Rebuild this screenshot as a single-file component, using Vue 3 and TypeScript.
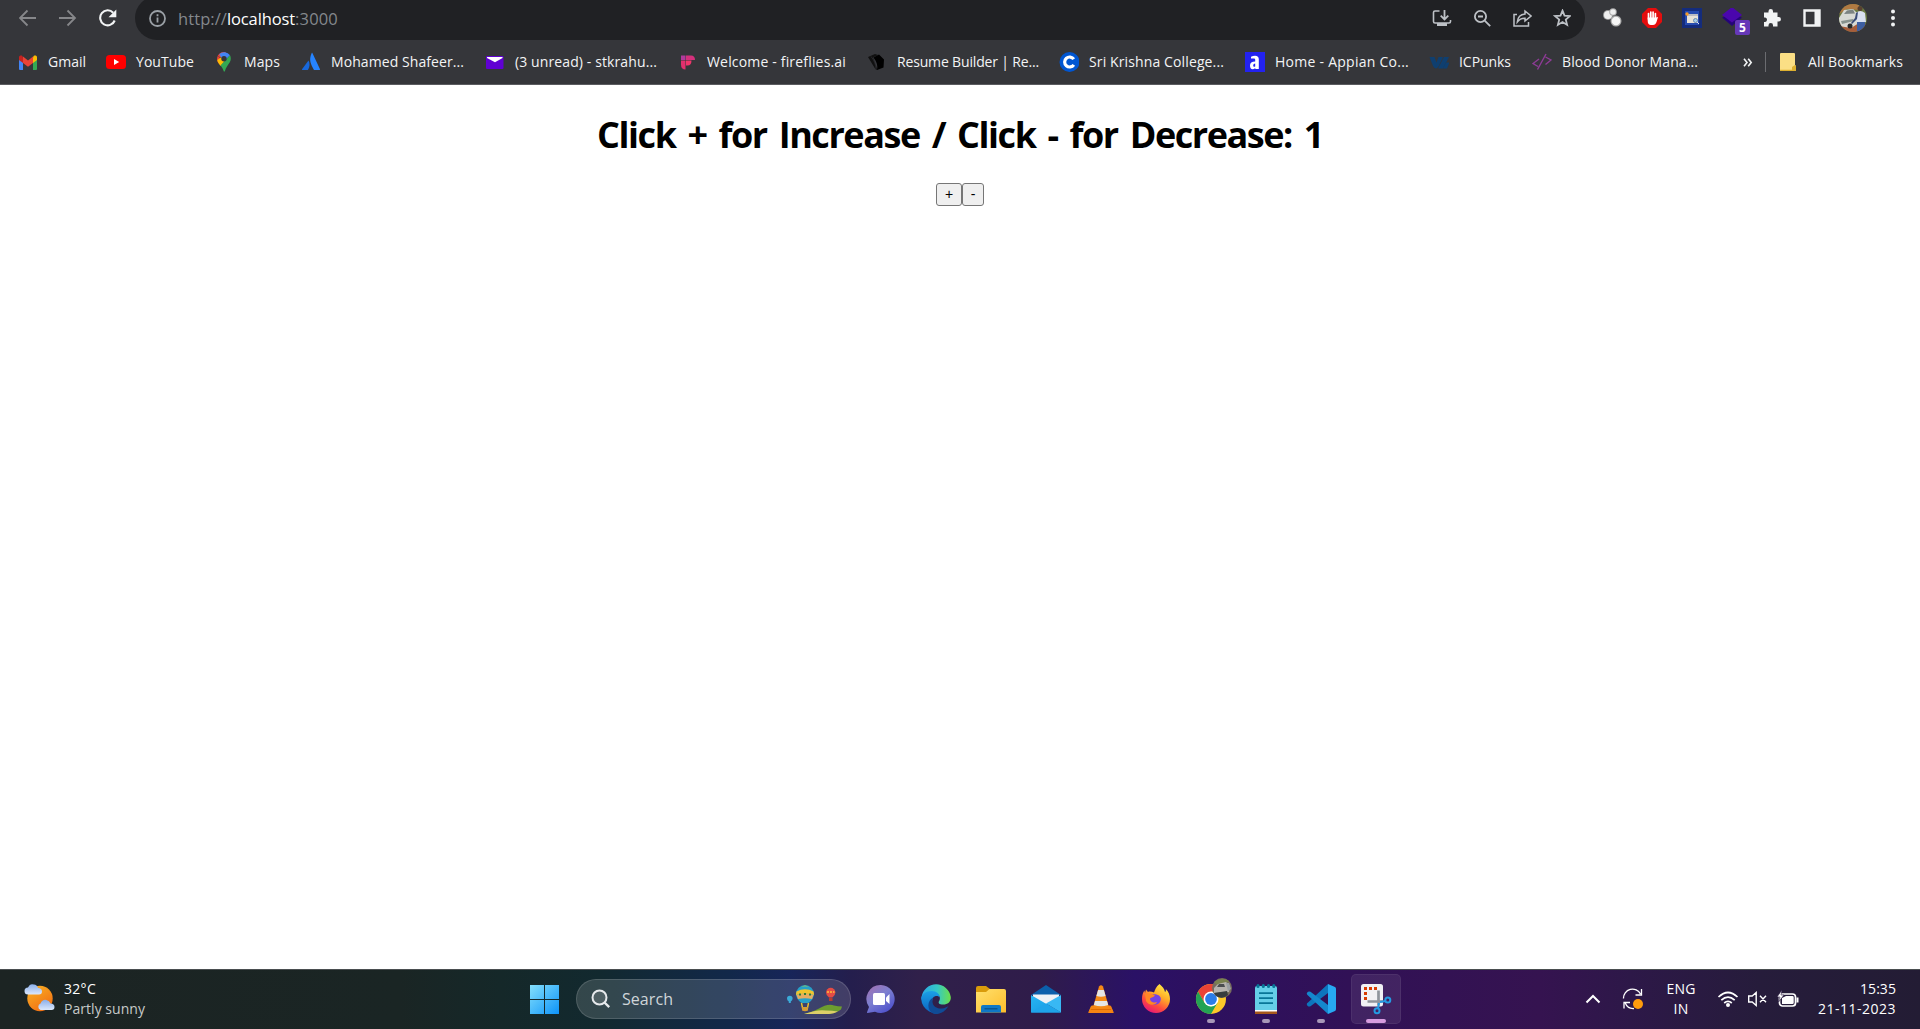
<script setup lang="ts">
import { ref } from 'vue'

interface Bookmark {
  label: string
  cell: number
  text: number
  art: string
}

interface TaskApp {
  name: string
  state?: 'open' | 'active'
  art: string
}

const count = ref(1)

// Tracks a label so that it fills the given width exactly.
const vFit = {
  mounted(el: HTMLElement, binding: { value: number }) {
    const natural = el.getBoundingClientRect().width
    const letters = (el.textContent ?? '').trim().length
    el.style.letterSpacing = `${(binding.value - natural) / letters}px`
  },
}

// Icons are drawn on a 20 x 20 grid.
const bookmarks: Bookmark[] = [
  {
    label: 'Gmail', cell: 88, text: 38,
    art: '<path d="M1 5v12a1 1 0 0 0 1 1h3V8z" fill="#4285f4"/><path d="M19 5v12a1 1 0 0 1-1 1h-3V8z" fill="#34a853"/><path d="M15 5.500V11l4-3V5.500C19 3.500 17 3 15.600 4z" fill="#fbbc04"/><path d="M5 5.500V11L1 8V5.500C1 3.500 3 3 4.400 4z" fill="#c5221f"/><path d="M5 4.600l5 3.800 5-3.800V11l-5 3.800L5 11z" fill="#ea4335"/>',
  },
  {
    label: 'YouTube', cell: 108, text: 58,
    art: '<rect x="0" y="3" width="20" height="14" rx="3.500" fill="#f00"/><path d="M8 7l5.200 3L8 13z" fill="#fff"/>',
  },
  {
    label: 'Maps', cell: 87, text: 36,
    art: '<path d="M4.500 11.500C3 9 2.600 6.500 3.600 4L8 7.500z" fill="#ea4335"/><path d="M3.600 4A7 7 0 0 1 12 .3L7.500 6z" fill="#ea4335"/><path d="M5.200 2.300A7 7 0 0 1 16 3.300L11.500 8 7.500 6z" fill="#4285f4"/><path d="M3.300 8c.3 2 1.700 4 3.200 6l5.500-6-5-2.500z" fill="#fbbc04"/><path d="M16 3.300c1 2 1.200 4.700-.2 7-1.800 3-4 5-5 9.200h-1c-.5-2-1.600-3.800-3.300-6z" fill="#34a853"/><circle cx="10" cy="6.700" r="2.700" fill="#35363a"/>',
  },
  {
    label: 'Mohamed Shafeer...', cell: 184, text: 133,
    art: '<path d="M7.500 8.500C9 11 9 14.500 6.900 18H1.500c-.5 0-.7-.4-.5-.8z" fill="#1868db"/><path d="M10.600 1.200c.3-.5.600-.5.900 0L19 17.200c.2.500 0 .8-.5.800h-5c-.4 0-.6-.1-.8-.5C10 12 7.500 8 10.600 1.200z" fill="#2684ff"/>',
  },
  {
    label: '(3 unread) - stkrahu...', cell: 192, text: 142,
    art: '<rect x="1" y="4" width="17.500" height="13" rx="1" fill="#6001d2"/><path d="M2 5h15.500v1L10 10.200 2 6z" fill="#fff"/>',
  },
  {
    label: 'Welcome - fireflies.ai', cell: 190, text: 139,
    art: '<path d="M4 3.500h4.500v4.500H4z" fill="#b13a9b"/><path d="M9 3.500h5q4 0 4 4.500H9z" fill="#d4307c"/><path d="M4 8.500h4.500V17.500q-4.500 0-4.500-5z" fill="#e0306d"/><path d="M9 8.500h5.500q0 5-4 5H9z" fill="#f0356b"/>',
  },
  {
    label: 'Resume Builder | Re...', cell: 192, text: 142,
    art: '<path d="M1 5l7-3 3 1-5 2.500 4.500 12.500q-2 0-2.800-2z" fill="#111"/><path d="M6.500 5.500L12 2.500l5 5-.5 8-6.500 2.500q1.500-6-3.500-12.500z" fill="#000"/><path d="M4 4.500c3 3.500 5 8 5 12.500" stroke="#35363a" stroke-width=".6" fill="none"/>',
  },
  {
    label: 'Sri Krishna College...', cell: 186, text: 135,
    art: '<circle cx="10.500" cy="10" r="10" fill="#0056d2"/><path d="M14.800 12.800a5 5 0 1 1 0-5.600" fill="none" stroke="#fff" stroke-width="3.200"/>',
  },
  {
    label: 'Home - Appian Co...', cell: 184, text: 134,
    art: '<path d="M0 0h20v20H0z" fill="#2322f0"/><path d="M6 6.500V4.800Q8 3.800 10 3.800q3.800 0 3.800 3.500V17h-3.500v-1Q9 17.200 7.600 17.200 5 17 5 13.500q0-4 5.200-4V7.700q0-1.200-1.200-1.200zM10.200 11.500q-2 0-2 2t2 1z" fill="#fff" fill-rule="evenodd"/>',
  },
  {
    label: 'ICPunks', cell: 103, text: 52,
    art: '<path d="M.5 5h5l2 5.500L9.500 5H14l-4.500 9.500Q6.500 18.500 4 14z" fill="#0f3f70"/><path d="M15 5h5l-6 11.500H9z" fill="#0f3f70"/><path d="M17 10.500h3.500L18 16.500h-4z" fill="#0f3f70"/>',
  },
  {
    label: 'Blood Donor Mana...', cell: 190, text: 136,
    art: '<path d="M7 7L1 11.500l5 3M13.500 5l5.500 3-5.500 4.500M14 2L5.500 17.500" fill="none" stroke="#8e3b96" stroke-width="1.400"/>',
  },
]

// Icons are drawn on a 30 x 30 grid.
const apps: TaskApp[] = [
  {
    name: 'Chat',
    art: '<defs><linearGradient id="chat" x1="0" y1="0" x2=".7" y2="1"><stop offset="0" stop-color="#a66fae"/><stop offset=".5" stop-color="#7c7fd0"/><stop offset="1" stop-color="#4f52cc"/></linearGradient></defs><path d="M15 1a14 14 0 1 1-6 26.800L1.500 29q-.7 0-.5-.8L3 23A14 14 0 0 1 15 1z" fill="url(#chat)"/><rect x="7" y="9" width="12" height="12" rx="1.500" fill="#fff"/><path d="M20 13.500l3.500-3.500v10L20 17z" fill="#fff"/>',
  },
  {
    name: 'Edge',
    art: '<defs><linearGradient id="e1"><stop offset="0" stop-color="#2aa6e8"/><stop offset=".55" stop-color="#35c8c4"/><stop offset="1" stop-color="#6be04a"/></linearGradient><linearGradient id="e2" x1="0" y1="0" x2="0" y2="1"><stop offset="0" stop-color="#1ba0e6"/><stop offset="1" stop-color="#0b62c0"/></linearGradient></defs><path d="M.5 13A14.800 14.800 0 0 1 29.800 13c.4 5-3.500 7.500-7.500 7.500-4.500 0-5.500-1.800-4-3.800 1.500-2.500.5-7.200-5-7.200C7 9.500 2 11 .3 16z" fill="url(#e1)"/><path d="M.2 15c.3-4.500 5-8 10.500-8 5 0 8 3 8 6.500-1-2-5-2-6.500 0-2 3-1.700 8 2.500 11.500 2 1.800 5 2.800 8.300 2A15 15 0 0 1 .2 15z" fill="url(#e2)"/><path d="M12.200 13.500c-3 8 3 11.500 8.800 11 2.500-.2 5-1.700 6.500-2.500C24 28 18 31 12.500 29.800 5.500 26.500 6 16.500 12.200 13.500z" fill="#104b96"/>',
  },
  {
    name: 'File Explorer',
    art: '<defs><linearGradient id="fold" x1="0" y1="0" x2="1" y2="1"><stop offset="0" stop-color="#ffe06d"/><stop offset="1" stop-color="#fdbd2b"/></linearGradient></defs><path d="M0 4q0-2 2-2h8l4 3v4H0z" fill="#d99b0b"/><path d="M0 8h10l3.500-3H28q2 0 2 2v21.500H0z" fill="url(#fold)"/><path d="M5 28.500V23q0-2 2-2h16q2 0 2 2v5.500z" fill="#0f78c6"/><path d="M8.500 24.800h13" stroke="#074e87" stroke-width="1.200"/>',
  },
  {
    name: 'Mail',
    art: '<defs><linearGradient id="mail" x1="0" y1="0" x2="1" y2="1"><stop offset="0" stop-color="#27b5f3"/><stop offset="1" stop-color="#1697e2"/></linearGradient></defs><path d="M0 11L15 1l15 10z" fill="#0b5fab"/><path d="M2 10.500h26v3L15 21 2 13z" fill="#eef1f5"/><path d="M0 11l30 17.500H0z" fill="url(#mail)"/><path d="M30 11v17.500L15 19.500z" fill="#38b8f4"/><path d="M0 28.500L15 19.500l15 9z" fill="#1ea4ea"/>',
  },
  {
    name: 'VLC',
    art: '<path d="M5.500 22h19l2.800 6.500H2.700z" fill="#f58412" stroke="#f58412" stroke-width="1" stroke-linejoin="round"/><path d="M13 2.500Q15 0 17 2.500l5.800 20.200q-7.800 3.800-15.600 0z" fill="#f58a17"/><path d="M12.100 6h5.800l1.700 6q-4.600 1.500-9.200 0z" fill="#e5e5e5"/><path d="M9 17h12l1.200 4q-7.200 2.500-14.400 0z" fill="#e5e5e5"/><path d="M5 25.500h20" stroke="#d76500" stroke-width=".8"/>',
  },
  {
    name: 'Firefox',
    art: '<defs><linearGradient id="fox" x1=".8" y1="0" x2=".25" y2="1"><stop offset="0" stop-color="#fff14a"/><stop offset=".38" stop-color="#ffad28"/><stop offset=".7" stop-color="#ff4b3d"/><stop offset="1" stop-color="#e3127e"/></linearGradient></defs><path d="M18.500 0c3 2.500 5 5 5.500 8 1-.5 1-2 .8-3 3 3 4.200 6.500 4.200 10A14 14 0 0 1 1 15c0-4 1-6.500 2.500-8.500L4 9l1-3.500L7 8c2-1 4 0 6 .5 1-2.500 2-6 5.500-8.500z" fill="url(#fox)"/><path d="M8 15c0-4 4-5.500 7.500-4.500 4 1 5.500 4 3.500 7.500-2.500 4-9 3.500-11-1z" fill="#7542e5"/><path d="M4 10c3-1 7-1 10 1.500-1 2-4 1.500-5 3 0 4 4.500 4.500 7 3.500-1.500 4-9 3.500-11-1z" fill="#ff8725"/>',
  },
  {
    name: 'Chrome', state: 'open',
    art: '<circle cx="15" cy="15" r="15" fill="#fdc829"/><path d="M2 7.500a15 15 0 0 1 26 0H15L8.500 18.700z" fill="#ea4335"/><path d="M2 7.500A15 15 0 0 0 15 30l6.500-11.200L15 22.500 8.500 18.700z" fill="#23a354"/><circle cx="15" cy="15" r="7.500" fill="#fff"/><circle cx="15" cy="15" r="5.900" fill="#2b7de9"/><g transform="translate(26 4)"><circle r="10" fill="#766c5e"/><path d="M-8-6Q0-12 7-7L3-4-5-3z" fill="#79824f"/><path d="M-8 0l4-4L4-6 8-2 7 4-8 5z" fill="#b5b3ad"/><path d="M-5-1l2-3 5 0 1 3z" fill="#4a4e50"/><path d="M-8 5L5 3 6 7Q0 12-6 8z" fill="#373d3e"/><path d="M4-5l3 0 2 6-3 2z" fill="#9aa0a3"/></g>',
  },
  {
    name: 'Notepad', state: 'open',
    art: '<path d="M4 25h22v5H4z" fill="#a6571b"/><path d="M4 25h22v2.500H4z" fill="#fff"/><path d="M4 4q0-2 2-2h18q2 0 2 2v22H4z" fill="#65cfe8"/><path d="M8 9.200h14M8 14.200h14M8 19.200h14" stroke="#087697" stroke-width="1.700"/><g fill="#087697"><rect x="5.500" y="0" width="3" height="4" rx="1.500"/><rect x="10.800" y="0" width="3" height="4" rx="1.500"/><rect x="16" y="0" width="3" height="4" rx="1.500"/><rect x="21.300" y="0" width="3" height="4" rx="1.500"/></g>',
  },
  {
    name: 'Visual Studio Code', state: 'open',
    art: '<path d="M22 0L2 18.500q-2.500 1.700 0 3.700 1.200.8 2.500 0L22 9z" fill="#0d75bd"/><path d="M22 30L2 11.500Q-.5 9.700 2 7.800q1.200-.8 2.500 0L22 21z" fill="#1487cd"/><path d="M22 0l7 3q1 .5 1 2v20q0 1.500-1 2l-7 3z" fill="#27a9f2"/>',
  },
  {
    name: 'Snipping Tool', state: 'active',
    art: '<rect x="0" y="0" width="22" height="22.500" rx="2.500" fill="#f1f1f4"/><path d="M4.500 16V4.500H17" fill="none" stroke="#d83b01" stroke-width="3" stroke-dasharray="3 2"/><path d="M17.500 6.500v15M6.500 17.500H22" stroke="#8f959c" stroke-width="2.700"/><g fill="none" stroke="#249be3" stroke-width="2"><circle cx="26.800" cy="16" r="2.500"/><circle cx="16" cy="26.800" r="2.500"/><path d="M19 18l5.500-1M18 19l-1 5.500"/></g>',
  },
]
</script>

<template>
  <div class="screen">
    <header class="browser">
      <div class="toolbar">
        <span class="tool dim"><svg width="18" height="18" viewBox="0 0 18 18"><path d="M17 9H2M8.500 1.500L1 9l7.500 7.500" /></svg></span>
        <span class="tool dim"><svg width="18" height="18" viewBox="0 0 18 18"><path d="M0 9H15.500M8.500 1.500L16 9l-7.500 7.500" /></svg></span>
        <span class="tool lit"><svg width="18" height="18" viewBox="0 0 18 18"><path d="M15.700 11.500A7.500 7.500 0 1 1 14.200 3.700" stroke-width="2.100" /><path d="M17.300.5v7.700H9.500z" fill="#f1f3f4" stroke="none" /></svg></span>
        <div class="address">
          <svg class="info" width="17" height="17" viewBox="0 0 17 17"><circle cx="8.500" cy="8.500" r="7.500" /><path d="M8.500 7.500v5M8.500 4.200v2" /></svg>
          <span class="url"><span v-fit="49">http://</span><span v-fit="68" class="host">localhost</span><span v-fit="43">:3000</span></span>
          <span class="tool grey"><svg width="20" height="18" viewBox="0 0 20 18"><path d="M7.500 2H3Q1.500 2 1.500 3.500v9Q1.500 14 3 14h14q1.500 0 1.500-1.500V11" stroke-width="1.600" /><path d="M12.500 1v9M8.700 6.700l3.800 3.800 3.800-3.800" /><path d="M5 14h10v3H5z" fill="#bdc1c6" stroke="none" /></svg></span>
          <span class="tool grey"><svg width="18" height="18" viewBox="0 0 18 18"><circle cx="7.500" cy="7.500" r="5.600" /><path d="M11.700 11.700l5.500 5.500M5 7.500h5" /></svg></span>
          <span class="tool grey"><svg width="20" height="18" viewBox="0 0 20 18"><path d="M5 5.500H2V17H16.500v-4" stroke-width="1.500" /><path d="M13 2l6 5-6 5V9.300Q8.500 9 5.300 13 6 5.500 13 5z" stroke-width="1.500" /></svg></span>
          <span class="tool grey"><svg width="18" height="18" viewBox="0 0 18 18"><path d="M9.500 1.700l2 5 5.400.4-4.100 3.500 1.300 5.300-4.600-2.800-4.600 2.800 1.300-5.300L2.100 7.100l5.400-.4z" /></svg></span>
        </div>
        <span class="tool">
          <svg width="20" height="20" viewBox="0 0 20 20"><g stroke="none"><circle cx="6" cy="7" r="5" fill="#999" /><circle cx="6" cy="7" r="4" fill="#eee" /><circle cx="11" cy="4" r="3.800" fill="#aaa" /><circle cx="11" cy="4" r="2.800" fill="#eee" /><circle cx="14" cy="13" r="5.500" fill="#aaa" /><circle cx="14" cy="13" r="4.300" fill="#f6f6f6" /></g></svg>
        </span>
        <span class="tool">
          <svg width="20" height="20" viewBox="0 0 20 20"><path d="M6 0h8l6 6v8l-6 6H6l-6-6V6z" fill="#e40d0d" stroke="none" /><path d="M6.500 5.500V11M8.800 4v7M11.100 4v7M13.400 5.500V12" stroke="#fff" stroke-width="1.700" stroke-linecap="round" /><path d="M5.700 9.500h8.500l1.800-.5-1.500 5q-1 3-3.500 3H9q-3.300 0-3.300-4z" fill="#fff" stroke="none" /></svg>
        </span>
        <span class="tool">
          <svg width="20" height="20" viewBox="0 0 20 20"><path d="M0 0h20v20H0z" fill="#142c7c" stroke="none" /><path d="M3 3h14v14H3z" fill="#254bb0" stroke="none" /><path d="M5 6h11v9H5z" fill="#e8e3d7" stroke="none" /><path d="M5 7h11" stroke="#8d96af" stroke-width="1" /><circle cx="5" cy="6" r="1.700" fill="#f49a25" stroke="none" /><circle cx="13.500" cy="12.500" r="2" fill="#a9d0e8" stroke="#597ba5" stroke-width=".8" /><path d="M15 14l2 2" stroke="#dfe6f3" stroke-width="1" /></svg>
        </span>
        <span class="tool badge-host">
          <svg width="20" height="20" viewBox="0 0 20 20"><path d="M0 9.500l10 8.500 10-8.500-10-4z" fill="#25047a" stroke="none" /><path d="M10-1l10 8-10 7.500L0 7z" fill="#4a06ad" stroke="none" /></svg>
          <b class="badge">5</b>
        </span>
        <span class="tool">
          <svg width="20" height="20" viewBox="0 0 20 20"><path d="M2 4.500h4.500V3.200a2.200 2.200 0 0 1 4.500 0v1.300h4.500V9h1.200a2.200 2.200 0 0 1 0 4.500h-1.200V18.500h-4.500v-1.200a2.200 2.200 0 0 0-4.500 0v1.200H2V14h1.200a2.300 2.300 0 0 0 0-4.500H2z" fill="#f1f3f4" stroke="none" /></svg>
        </span>
        <span class="tool">
          <svg width="18" height="18" viewBox="0 0 18 18"><path d="M1.500 1.500h15v15h-15z" stroke="#f1f3f4" stroke-width="2.400" /><path d="M11.500 1H17v16h-5.500z" fill="#f1f3f4" stroke="none" /></svg>
        </span>
        <span class="tool avatar">
          <svg width="28" height="28" viewBox="0 0 28 28"><defs><clipPath id="face"><circle cx="14" cy="14" r="14" /></clipPath></defs><g clip-path="url(#face)" stroke="none"><path d="M0 0h28v28H0z" fill="#6b7b43" /><path d="M0 0h20v6L8 5 0 10z" fill="#b17a42" /><path d="M0 20h28v8H0z" fill="#a65d3b" /><path d="M0 14l5-8 9-1 5 5 1 9-8 5-12-2z" fill="#d7d9d4" /><path d="M5 10l3-3.500 6-1 2 4z" fill="#7b8382" /><path d="M2 17l12-2 1 2-12 3z" fill="#86918c" /><circle cx="11" cy="22" r="2.500" fill="#25282a" /><path d="M17 9q4-4 9 0l1 9-9 1z" fill="#d9e0f0" /><path d="M17 9l2-1-1 7-5 5-1-1 4-5z" fill="#394b77" /><path d="M18 18h8v9h-8z" fill="#3d5ea1" /><circle cx="21" cy="4.500" r="2.500" fill="#594030" /></g></svg>
        </span>
        <span class="tool">
          <svg width="6" height="18" viewBox="0 0 6 18"><g fill="#f1f3f4" stroke="none"><circle cx="3" cy="2.500" r="2" /><circle cx="3" cy="9" r="2" /><circle cx="3" cy="15.500" r="2" /></g></svg>
        </span>
      </div>
      <nav class="bookmarks">
        <a v-for="mark in bookmarks" :key="mark.label" class="bookmark" :style="{ width: mark.cell + 'px' }">
          <svg width="20" height="20" viewBox="0 0 20 20" v-html="mark.art"></svg>
          <span v-fit="mark.text">{{ mark.label }}</span>
        </a>
        <span class="more"><svg width="10" height="9" viewBox="0 0 10 9"><path d="M1 .8l3 3.700-3 3.700M5.200.8l3 3.700-3 3.700" /></svg></span>
        <i class="divider"></i>
        <a class="bookmark all">
          <svg width="16" height="18" viewBox="0 0 16 18"><path d="M0 1q0-1 1-1h13q1 0 1 1v11l1 1v4q0 1-1 1H1q-1 0-1-1z" fill="#fbdf85" /><path d="M0 16.800h16v.7q0 .5-1 .5H1q-1 0-1-1zM12 17v-3l3-2 1 1v4z" fill="#ddb02f" /></svg>
          <span v-fit="95">All Bookmarks</span>
        </a>
      </nav>
    </header>

    <main class="page">
      <h1><span v-fit="726">Click + for Increase / Click - for Decrease: {{ count }}</span></h1>
      <div class="controls">
        <button class="plus" @click="count++">+</button><button class="minus" @click="count--">-</button>
      </div>
    </main>

    <footer class="taskbar">
      <div class="weather">
        <svg width="32" height="30" viewBox="0 0 32 30"><defs><linearGradient id="sun" x1="0" y1="0" x2=".6" y2="1"><stop offset="0" stop-color="#f9b526" /><stop offset="1" stop-color="#f27013" /></linearGradient><linearGradient id="cloud" x1="0" y1="0" x2="0" y2="1"><stop offset="0" stop-color="#8aaeea" /><stop offset="1" stop-color="#dce8fc" /></linearGradient></defs><circle cx="16" cy="14.500" r="12.700" fill="url(#sun)" /><path d="M4 10.500a3.500 3.500 0 0 1 0-7Q6-1 10 .5q3 0 4 3.500 4 0 4 3.500 0 3-3 3z" fill="url(#cloud)" /><path d="M16.500 26a3.500 3.500 0 0 1 0-6.500q2-4.500 6-3.500 3 .5 4 3.500 4 0 4 3.500 0 3-3 3z" fill="url(#cloud)" /></svg>
        <div class="lines"><span v-fit="32">32°C</span><span v-fit="81" class="soft">Partly sunny</span></div>
      </div>
      <div class="start">
        <svg width="29" height="29" viewBox="0 0 29 29"><defs><linearGradient id="win" x1="0" y1="0" x2="29" y2="29" gradientUnits="userSpaceOnUse"><stop offset="0" stop-color="#84e0fc" /><stop offset="1" stop-color="#0d93f9" /></linearGradient></defs><path d="M0 0h14v14H0zM15 0h14v14H15zM0 15h14v14H0zM15 15h14v14H15z" fill="url(#win)" /></svg>
      </div>
      <div class="search">
        <svg width="20" height="20" viewBox="0 0 20 20"><circle cx="8.500" cy="8.500" r="7" fill="#ffffff22" stroke="#e6e9ec" stroke-width="2" /><path d="M13.500 13.500l4.700 4.700" stroke="#e6e9ec" stroke-width="2.400" /></svg>
        <span v-fit="51">Search</span>
        <svg class="balloons" width="56" height="32" viewBox="0 0 56 32">
          <path d="M17 31q6-1 14-5 10-6 16-3.500 4 1 8 1l-1 3q-4 3-12 4.500z" fill="#6d9d2f" /><path d="M17 31q14-5 22-3.500 6 0 12 1-4 2-9 2.500z" fill="#dccf68" />
          <path d="M0 15.500a2.800 2.800 0 0 1 5.600 0q0 2-1.800 3v1.500h-2v-1.500Q0 17.500 0 15.500z" fill="#3babd9" />
          <path d="M9 11a9 9 0 0 1 18 0q0 5-5.500 9h-7Q9 16 9 11z" fill="#26a0c9" /><path d="M9 12q0-2 .5-3.500Q18 4 26.500 8.500 27 10 27 12q-9-2.500-18 0z" fill="#f0c42e" /><path d="M11 5.500Q18 1 25 5.500L22 4Q18 1 14 4z" fill="#a2cb4b" /><path d="M9.500 12q8.500-2.500 17 0l-1.500 4q-7-1.500-14 0z" fill="#e5ac61" /><path d="M12 11.500h2M17 11h2M22 11.500h2" stroke="#2f7d3a" stroke-width="2" /><path d="M14.500 20l1 5h5l1-5" fill="none" stroke="#f0c42e" stroke-width="1.400" /><path d="M15 24h6v3.500q-3 1.500-6 0z" fill="#d59d35" />
          <path d="M39 9.500a4.700 4.700 0 0 1 9.400 0q0 3-3 5h-3.400q-3-2-3-5z" fill="#e34b45" /><path d="M40 9h7.500" stroke="#f7a43b" stroke-width="2" stroke-dasharray="2 1" /><path d="M42 15h3.500v3H42z" fill="#b93b2e" />
        </svg>
      </div>
      <div class="apps">
        <div v-for="app in apps" :key="app.name" class="app" :class="app.state">
          <svg width="30" height="30" viewBox="0 0 30 30" overflow="visible" v-html="app.art"></svg>
          <i v-if="app.state" class="mark"></i>
        </div>
      </div>
      <div class="tray">
        <svg class="chevron" width="16" height="10" viewBox="0 0 16 10"><path d="M1.500 8.500L8 2l6.500 6.500" stroke-width="2" /></svg>
        <svg class="sync" width="22" height="22" viewBox="0 0 22 22"><path d="M1.500 10.500a9 9 0 0 1 17-4.500M19.500 1v6h-6M3 14.500q2.500 6.500 9 6M2 20.500v-6h6" stroke-width="1.300" /><circle cx="16" cy="16" r="5" fill="#ff9c0c" stroke="none" /></svg>
        <div class="lines language"><span v-fit="29">ENG</span><span v-fit="15">IN</span></div>
        <svg class="wifi" width="22" height="18" viewBox="0 0 22 18"><path d="M1.500 7Q11-2 20.500 7M4.300 10.200q6.700-6.200 13.400 0M7.200 13q3.800-3.400 7.600 0" stroke-width="1.700" /><circle cx="11" cy="15" r="2" fill="#fff" stroke="none" /></svg>
        <svg class="volume" width="22" height="16" viewBox="0 0 22 16"><path d="M1.700 5v6h3.500l4 3.500v-13L5.200 5zM13 4.800l6 6.400M19 4.800l-6 6.400" stroke-width="1.400" /></svg>
        <svg class="battery" width="22" height="18" viewBox="0 0 22 18"><rect x="2.500" y="4" width="16" height="12" rx="3" stroke-width="1.700" /><path d="M5 8l4-2h6.500q1.200 0 1.200 1.200v5.600q0 1.200-1.200 1.200H5z" fill="#fff" stroke="none" /><path d="M20.500 7.500v5" stroke-width="2" /><path d="M5 0L0 7h3L1.500 12 7 5H4z" fill="#fff" stroke="#281a3f" stroke-width=".6" /></svg>
        <div class="lines clock"><span v-fit="36">15:35</span><span v-fit="78">21-11-2023</span></div>
      </div>
    </footer>
  </div>
</template>

<style>
body {
  margin: 0;
  overflow: hidden;
}
</style>

<style scoped>
.screen {
  display: flex;
  flex-direction: column;
  width: 1920px;
  height: 1029px;
  background: #fff;
  font-family: 'Open Sans', 'Noto Sans', sans-serif;
  font-size: 14px;
  line-height: 20px;
  white-space: nowrap;
}

.screen svg {
  display: block;
  flex: none;
}

.browser {
  box-sizing: border-box;
  height: 85px;
  flex: none;
  overflow: hidden;
  background: #35363a;
  border-bottom: 1px solid #5b5c60;
  color: #f3f4f5;
}

.toolbar {
  display: flex;
  align-items: center;
  height: 36px;
  padding: 0 8px 4px;
}

.tool {
  display: flex;
  align-items: center;
  justify-content: center;
  flex: none;
  width: 40px;
  height: 36px;
}

.tool svg,
.info {
  fill: none;
  stroke-width: 1.8;
}

.dim {
  stroke: #86878a;
}

.lit {
  stroke: #f1f3f4;
}

.grey {
  stroke: #bdc1c6;
}

.address {
  display: flex;
  align-items: center;
  box-sizing: border-box;
  flex: none;
  width: 1450px;
  height: 44px;
  margin: 0 7px;
  padding: 0 3px 0 14px;
  border-radius: 22px;
  background: #202124;
}

.info {
  stroke: #9aa0a6;
}

.url {
  display: flex;
  flex: 1;
  padding: 2px 0 0 12px;
  color: #84888d;
  font-size: 16.5px;
}

.host {
  color: #fff;
}

.badge-host {
  position: relative;
}

.badge {
  position: absolute;
  left: 23px;
  top: 20px;
  width: 15px;
  height: 15px;
  border-radius: 2px;
  background: #6638b8;
  color: #fff;
  font-size: 12px;
  line-height: 15px;
  text-align: center;
}

.avatar {
  padding-left: 1px;
}

.bookmarks {
  display: flex;
  align-items: center;
  height: 44px;
  padding-left: 18px;
}

.bookmark {
  display: flex;
  align-items: center;
  flex: none;
  gap: 10px;
}

.more {
  display: flex;
  width: 10px;
  margin-left: 21px;
}

.more svg {
  fill: none;
  stroke: #f1f3f4;
  stroke-width: 1.6;
}

.divider {
  width: 1px;
  height: 20px;
  margin: 0 14px 0 12px;
  background: #6b6c70;
}

.all {
  gap: 12px;
}

.page {
  flex: 1;
  background: #fff;
  color: #000;
}

h1 {
  display: flex;
  justify-content: center;
  margin: 24px 0 23px;
  font-size: 36px;
  line-height: 51px;
  font-weight: 700;
  word-spacing: 4px;
}

.controls {
  display: flex;
  justify-content: center;
}

button {
  box-sizing: border-box;
  height: 23px;
  padding: 0;
  border: 1px solid #767676;
  border-radius: 3px;
  background: #efefef;
  color: #000;
  font-family: 'Liberation Sans', Arial, sans-serif;
  font-size: 14px;
  line-height: 21px;
}

.plus {
  width: 26px;
}

.minus {
  width: 22px;
}

.taskbar {
  box-sizing: border-box;
  display: flex;
  align-items: center;
  flex: none;
  height: 60px;
  padding-bottom: 1px;
  border-top: 1px solid #4a4e50;
  background: linear-gradient(90deg, #1c2423 0, #1a2524 400px, #152829 500px, #12292f 600px, #12284a 730px, #172559 790px, #241e4d 850px, #30204a 920px, #2f1c4a 1040px, #2a1166 1135px, #2d105f 1200px, #311156 1350px, #351350 1540px, #2d1848 1630px, #261c3b 1760px, #231c34 1920px);
  color: #fff;
}

.weather {
  box-sizing: border-box;
  display: flex;
  align-items: center;
  flex: none;
  gap: 8px;
  width: 530px;
  padding-left: 24px;
}

.lines {
  display: flex;
  flex-direction: column;
  align-items: flex-start;
  padding-bottom: 1px;
}

.soft {
  color: #c7cac9;
}

.start {
  flex: none;
  width: 46px;
}

.search {
  box-sizing: border-box;
  display: flex;
  align-items: center;
  flex: none;
  width: 275px;
  height: 40px;
  margin-right: 2.5px;
  padding: 0 7px 0 14px;
  border: 1px solid #ffffff24;
  border-radius: 20px;
  background: #ffffff24;
  color: #cfd5d9;
  font-size: 16px;
  gap: 11px;
}

.balloons {
  margin-left: auto;
}

.apps {
  display: flex;
  flex: none;
}

.app {
  position: relative;
  display: flex;
  align-items: center;
  justify-content: center;
  width: 55px;
  height: 50px;
}

.active {
  box-sizing: border-box;
  width: 50px;
  margin: 0 2.5px;
  border-radius: 5px;
  background: #ffffff14;
  box-shadow: inset 0 0 0 1px #ffffff10;
}

.mark {
  position: absolute;
  bottom: 1px;
  width: 8px;
  height: 4px;
  border-radius: 2px;
  background: #a797b8;
}

.active .mark {
  width: 20px;
  background: #d79ce0;
}

.tray {
  display: flex;
  align-items: center;
  flex: 1;
  justify-content: flex-end;
  padding-right: 24px;
  fill: none;
  stroke: #fff;
}

.sync {
  margin-left: 21px;
}

.language {
  align-items: center;
  width: 34px;
  margin-left: 20px;
  padding-bottom: 0;
}

.wifi {
  margin-left: 19px;
}

.volume,
.battery {
  margin-left: 8px;
}

.clock {
  align-items: flex-end;
  width: 80px;
  margin-left: 17px;
}
</style>
